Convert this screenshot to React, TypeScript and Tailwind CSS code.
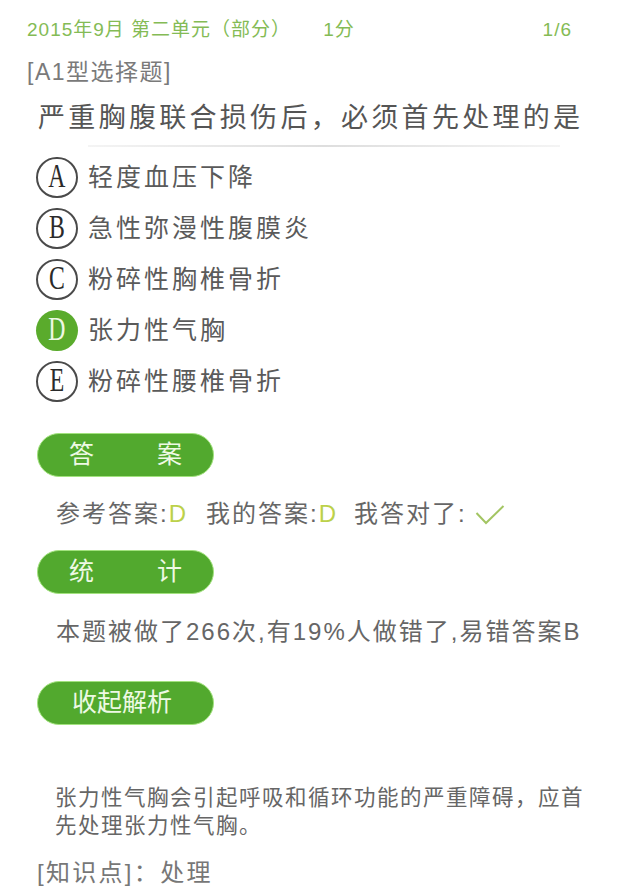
import React from "react";

const F = { fontFamily: '"Liberation Sans", "Noto Sans CJK SC", sans-serif' };

function Circle({ letter, active }: { letter: string; active?: boolean }) {
  return (
    <div
      className={
        active
          ? "w-[42px] h-[41px] rounded-full bg-[#5aab2c] flex items-center justify-center text-[#eef8e4] text-[33px] leading-none"
          : "w-[42px] h-[41px] rounded-full border-2 border-[#4a4a4a] flex items-center justify-center text-[#2a2a2a] text-[33px] leading-none"
      }
      style={{ fontFamily: '"Liberation Serif", "DejaVu Serif", serif' }}
    >
      <span className="inline-block scale-x-[0.72] mb-[3px]">{letter}</span>
    </div>
  );
}

function Pill({ children }: { children: React.ReactNode }) {
  return (
    <div className="ml-[37px] w-[177px] h-[44px] rounded-full bg-[#52a92e] border border-[#a2e27e] flex items-center text-[#eef9e4] text-[25px]">
      {children}
    </div>
  );
}

export default function App() {
  const options = [
    { l: "A", t: "轻度血压下降" },
    { l: "B", t: "急性弥漫性腹膜炎" },
    { l: "C", t: "粉碎性胸椎骨折" },
    { l: "D", t: "张力性气胸", a: true },
    { l: "E", t: "粉碎性腰椎骨折" },
  ];
  return (
    <div className="w-[640px] h-[893px] bg-white overflow-hidden flex flex-col" style={F}>
      <div className="flex justify-between pl-[27px] pr-[68px] pt-[17px] h-[43px] text-[19px] leading-[26px] tracking-[1px] text-[#84bb55]">
        <div className="flex">
          <span>2015年9月 第二单元（部分）</span>
          <span className="ml-[32px]">1分</span>
        </div>
        <span>1/6</span>
      </div>
      <div className="pl-[27px] mt-[14px] h-[30px] flex items-center text-[23px] tracking-[1.5px] text-[#7a7a7a]">
        [A1型选择题]
      </div>
      <div className="pl-[38px] mt-[13px] h-[36px] flex items-center text-[27px] tracking-[3.3px] text-[#555]">
        严重胸腹联合损伤后，必须首先处理的是
      </div>
      <div className="ml-[88px] w-[472px] h-[2px] mt-[9px] bg-gradient-to-r from-[#f4f4f4] via-[#dedede] to-[#f4f4f4]" />
      <div className="flex flex-col mt-[5px]">
        {options.map((o) => (
          <div key={o.l} className="flex items-center h-[51px] pl-[36px]">
            <Circle letter={o.l} active={o.a} />
            <span className="ml-[10px] text-[25px] tracking-[3px] text-[#5a5a5a]">{o.t}</span>
          </div>
        ))}
      </div>
      <div className="mt-[26px]">
        <Pill>
          <span className="ml-[31px]">答</span>
          <span className="ml-[63px]">案</span>
        </Pill>
      </div>
      <div className="pl-[56px] mt-[17px] h-[40px] flex items-center text-[24px] tracking-[2px] text-[#666]">
        <span>参考答案:</span>
        <span className="text-[#bcd14a]">D</span>
        <span className="ml-[18px]">我的答案:</span>
        <span className="text-[#bcd14a]">D</span>
        <span className="ml-[16px]">我答对了:</span>
        <svg className="ml-[8px] mt-[2px]" width="30" height="22" viewBox="0 0 30 22">
          <path d="M1.5 9 L11 19 L28.5 2" fill="none" stroke="#a3c563" strokeWidth="2" />
        </svg>
      </div>
      <div className="mt-[16px]">
        <Pill>
          <span className="ml-[31px]">统</span>
          <span className="ml-[63px]">计</span>
        </Pill>
      </div>
      <div className="pl-[56px] mt-[18px] h-[40px] flex items-center text-[24px] tracking-[2px] text-[#666]">
        本题被做了266次,有19%人做错了,易错答案B
      </div>
      <div className="mt-[29px]">
        <Pill>
          <span className="ml-[34px]">收起解析</span>
        </Pill>
      </div>
      <div className="pl-[55px] pr-[45px] mt-[59px] text-[21.5px] leading-[28px] tracking-[1.5px] text-[#666]">
        张力性气胸会引起呼吸和循环功能的严重障碍，应首先处理张力性气胸。
      </div>
      <div className="pl-[37px] mt-[17px] h-[32px] flex items-center text-[24px] tracking-[2.3px] text-[#777]">
        [知识点]：处理
      </div>
    </div>
  );
}
